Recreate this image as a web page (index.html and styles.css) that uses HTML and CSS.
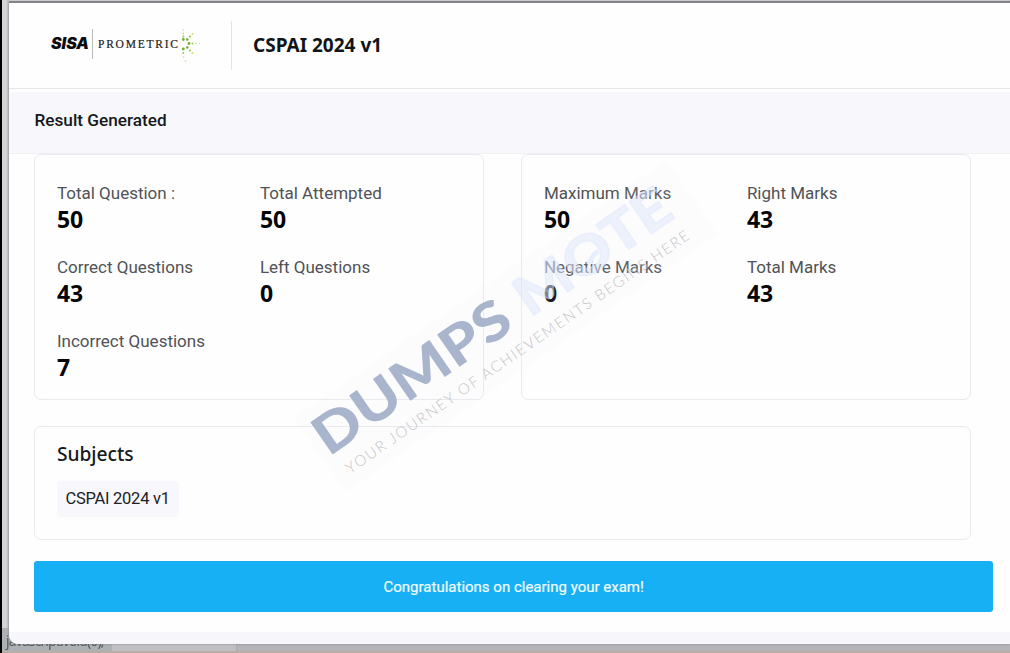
FILE: index.html
```
<!DOCTYPE html>
<html lang="en">
<head>
<meta charset="utf-8">
<title>Result Generated</title>
<link rel="stylesheet" href="styles.css">
</head>
<body>
<div class="status"><span class="status-text">javascript:void(0);</span></div>
<main class="modal">
  <header class="header">
    <svg class="logo" width="152" height="36" viewBox="0 0 152 36">
      <text class="sisa" x="1" y="23" textLength="38" lengthAdjust="spacingAndGlyphs">SISA</text>
      <path d="M42.500 3v30" stroke="#bbb"/>
      <text class="prometric" x="48" y="21.500" textLength="80" lengthAdjust="spacing">PROMETRIC</text>
      <g fill="#bfe077">
        <circle cx="133.300" cy="4" r=".7"/><circle cx="133.300" cy="7.500" r=".9"/>
        <circle cx="142.500" cy="8" r=".9"/><circle cx="146" cy="17.500" r=".8"/><circle cx="149.500" cy="17.500" r=".6"/>
        <circle cx="142.500" cy="27" r=".9"/><circle cx="133.500" cy="31" r=".8"/><circle cx="135.500" cy="35" r=".8"/>
      </g>
      <g fill="#98cb48">
        <circle cx="133.300" cy="10.500" r="1"/><circle cx="140" cy="10.500" r="1.100"/>
        <circle cx="142.500" cy="17.500" r="1"/><circle cx="140" cy="24.500" r="1.100"/><circle cx="133.300" cy="27" r="1"/>
      </g>
      <g fill="#71b02c">
        <circle cx="133.300" cy="13.500" r="1.400"/><circle cx="137.300" cy="13.500" r="1.300"/>
        <circle cx="139" cy="17.500" r="1.400"/><circle cx="137.300" cy="21.500" r="1.300"/><circle cx="133.300" cy="23" r="1.400"/>
      </g>
    </svg>
    <h1 class="title">CSPAI 2024 v1</h1>
  </header>
  <div class="band">Result Generated</div>
  <div class="content">
    <div class="cards">
      <section class="card stats">
        <div class="stat"><span class="label">Total Question :</span><b class="value">50</b></div>
        <div class="stat"><span class="label">Total Attempted</span><b class="value">50</b></div>
        <div class="stat"><span class="label">Correct Questions</span><b class="value">43</b></div>
        <div class="stat"><span class="label">Left Questions</span><b class="value">0</b></div>
        <div class="stat"><span class="label">Incorrect Questions</span><b class="value">7</b></div>
      </section>
      <section class="card stats">
        <div class="stat"><span class="label">Maximum Marks</span><b class="value">50</b></div>
        <div class="stat"><span class="label">Right Marks</span><b class="value">43</b></div>
        <div class="stat"><span class="label">Negative Marks</span><b class="value">0</b></div>
        <div class="stat"><span class="label">Total Marks</span><b class="value">43</b></div>
      </section>
    </div>
    <section class="card subjects">
      <h2 class="subjects-title">Subjects</h2>
      <span class="chip">CSPAI 2024 v1</span>
    </section>
    <div class="banner">Congratulations on clearing your exam!</div>
  </div>
  <div class="footer"></div>
</main>
<svg class="watermark" width="1010" height="653" viewBox="0 0 1010 653">
  <g transform="translate(332 455) rotate(-34.7)">
    <rect x="-10" y="-52" width="453" height="90" fill="#e8e9f2" fill-opacity=".1"/>
    <text class="dumps" x="-4" y="0" textLength="228" lengthAdjust="spacingAndGlyphs">DUMPS</text>
    <text class="mote" x="241" y="0" textLength="178" lengthAdjust="spacingAndGlyphs">MOTE</text>
    <path d="M321 -12c6-1 6-5 12-4" class="leaf"/>
    <text class="tagline" x="4" y="26" textLength="414" lengthAdjust="spacing">YOUR JOURNEY OF ACHIEVEMENTS BEGINS HERE</text>
  </g>
</svg>
</body>
</html>
```
FILE: styles.css
```
* { box-sizing: border-box; }
body {
  margin: 0;
  width: 1010px;
  height: 653px;
  overflow: hidden;
  position: relative;
  padding: 3px 0 0 9px;
  background: linear-gradient(#c9cacc, #c9cacc) 9px 0 / 100% 1px no-repeat,
    linear-gradient(#85868c, #85868c) 9px 1px / 100% 2px no-repeat,
    linear-gradient(90deg, #000 0 1.5px, #d4d3d6 2px 6px, #b5b5b8 9px) 0 0 / 9px 100% no-repeat,
    #b4b3b7;
  font-family: Roboto, "Liberation Sans", sans-serif;
}
.status {
  position: absolute;
  left: 2px;
  top: 628px;
  width: 1008px;
  height: 25px;
  border-bottom: 2px solid #b8aea6;
  background: linear-gradient(90deg, #adb0b4 0 110px, #c0c0c2 110px 234px, #aaa 234px 235px, #b4b3b7 235px);
}
.status-text {
  display: block;
  padding: 5px 0 0 4px;
  font: 14px/16px "Noto Sans", sans-serif;
  letter-spacing: -.9px;
  color: #555a5d;
  filter: blur(.6px);
}
.modal {
  position: relative;
  display: flex;
  flex-direction: column;
  width: 1001px;
  height: 641px;
  overflow: hidden;
  background: #fefefe;
  border-bottom-left-radius: 9px;
  box-shadow: 0 0 2px #77777c;
}
.header {
  display: flex;
  align-items: center;
  height: 86px;
  padding-left: 41px;
  border-bottom: 1px solid #e6e6e9;
}
.logo { display: block; overflow: visible; margin-top: -3px; }
.sisa { font: italic 900 16px Inter, sans-serif; fill: #0b0b0b; }
.prometric { font: 11.5px "Liberation Serif", serif; fill: #222; stroke: #222; stroke-width: .2px; }
.title {
  display: flex;
  align-items: center;
  height: 49px;
  margin: 0 0 0 29px;
  padding: 0 0 2px 21px;
  border-left: 1px solid #e4e4e7;
  font: 700 19px/24px "Noto Sans", sans-serif;
  color: #111518;
}
.band {
  height: 62px;
  margin-top: 3px;
  padding: 16px 0 0 25.5px;
  background: #f7f7fc;
  border-bottom: 1px solid #f1f1f3;
  font-size: 17.2px;
  line-height: 24px;
  font-weight: 500;
  color: #16181b;
}
.content { padding: 0 17px 0 25.4px; }
.cards {
  display: grid;
  grid-template-columns: 450px 450px;
  grid-template-rows: 246px;
  column-gap: 37px;
}
.card { border: 1px solid #e9e9ef; border-radius: 7px; background: #fefefe; }
.stats {
  display: grid;
  grid-template-columns: 203px 1fr;
  grid-template-rows: repeat(3, 74.3px);
  padding: 26.5px 0 0 21.5px;
}
.stat { display: flex; flex-direction: column; }
.label { font-size: 17px; line-height: 23px; color: #505257; }
.value { font: 700 23px/28px "Noto Sans", sans-serif; color: #050505; }
.subjects {
  width: 937px;
  height: 114px;
  margin-top: 26px;
  padding: 12px 0 0 21.5px;
}
.subjects-title { margin: 0 0 13px; font: 500 19.2px/29px "Noto Sans", sans-serif; color: #16181b; }
.chip {
  display: inline-block;
  height: 36px;
  padding: 0 9px 0 8.5px;
  border-radius: 3px;
  background: #f7f7fc;
  font-size: 16.5px;
  letter-spacing: -.25px;
  line-height: 36px;
  color: #202226;
}
.banner {
  height: 51px;
  margin-top: 21px;
  border-radius: 3px;
  background: #18b0f4;
  font-size: 15px;
  line-height: 52px;
  text-align: center;
  color: #f2fbff;
  -webkit-text-stroke: .2px #f2fbff;
}
.footer { height: 12px; margin-top: auto; background: #f6f6fb; }
.watermark { position: absolute; left: 0; top: 0; }
.dumps { font: 900 54px Lato, sans-serif; fill: #a3afc8; fill-opacity: .93; }
.mote { font: 900 54px Lato, sans-serif; fill: #dbe5fc; fill-opacity: .5; stroke: #dbe5fc; stroke-opacity: .4; stroke-width: 1.5px; }
.leaf { fill: none; stroke: #e8effd; stroke-width: 5px; stroke-linecap: round; }
.tagline { font: 300 15px Lato, sans-serif; fill: #c4c4c6; }
```
